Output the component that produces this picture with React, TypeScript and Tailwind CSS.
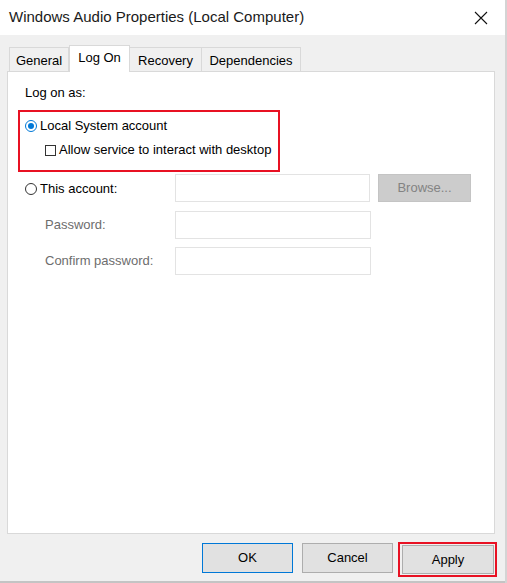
import React from "react";

function Radio({ checked }: { checked?: boolean }) {
  return (
    <span
      className={
        "flex h-[12px] w-[12px] items-center justify-center rounded-full border bg-white " +
        (checked ? "border-[#0078d7]" : "border-[#333333]")
      }
    >
      {checked && <span className="h-[6px] w-[6px] rounded-full bg-[#0078d7]" />}
    </span>
  );
}

function Field({ width = "w-[195px]" }: { width?: string }) {
  return <div className={"h-[28px] border border-[#e3e3e3] bg-white " + width} />;
}

function App() {
  return (
    <div className="flex h-[583px] w-[507px] bg-white font-['Liberation_Sans',Arial,sans-serif] text-[13px] text-black">
      <div className="flex w-[505px] flex-col border-b-2 border-[#c4c4c4]">
        {/* title bar */}
        <div className="flex h-[35px] items-center justify-between bg-white pl-[9px] pr-[16px]">
          <span className="text-[15px] text-[#1a1a1a]">Windows Audio Properties (Local Computer)</span>
          <svg width="14" height="14" viewBox="0 0 14 14" className="mr-[1px]">
            <path d="M1 1 L13 13 M13 1 L1 13" stroke="#111" strokeWidth="1.1" />
          </svg>
        </div>

        <div className="flex flex-1 flex-col bg-[#f0f0f0] px-[7px] pt-[10px]">
          {/* tabs */}
          <div className="flex items-end pl-[2px]">
            <div className="flex h-[24px] w-[60px] items-center justify-center border border-b-0 border-[#d9d9d9] pt-[2px]">General</div>
            <div className="-mb-[1px] z-10 flex h-[27px] w-[61px] items-center justify-center border border-b-0 border-[#d9d9d9] bg-white pb-[3px]">
              Log On
            </div>
            <div className="flex h-[24px] w-[72px] items-center justify-center border border-b-0 border-l-0 border-[#d9d9d9] pt-[2px]">Recovery</div>
            <div className="flex h-[24px] w-[99px] items-center justify-center border border-b-0 border-l-0 border-[#d9d9d9] pt-[2px]">Dependencies</div>
          </div>

          {/* panel */}
          <div className="flex h-[463px] w-[488px] flex-col border border-[#d9d9d9] bg-white pl-[10px] pt-[13px]">
            <div className="pl-[7px] leading-[16px]">Log on as:</div>

            <div className="mt-[9px] flex h-[62px] w-[262px] flex-col border-2 border-[#e81123] pl-[5px] pt-[6px]">
              <div className="flex items-center gap-[3px] leading-[16px]">
                <Radio checked />
                <span>Local System account</span>
              </div>
              <div className="mt-[8px] flex items-center gap-[3px] pl-[20px] leading-[16px]">
                <span className="h-[11px] w-[11px] border border-[#333333] bg-white" />
                <span>Allow service to interact with desktop</span>
              </div>
            </div>

            <div className="mt-[2px] flex items-center">
              <div className="flex w-[157px] items-center gap-[3px] pl-[7px] pt-[2px]">
                <Radio />
                <span>This account:</span>
              </div>
              <Field width="w-[195px]" />
              <div className="ml-[8px] flex h-[28px] w-[93px] items-center justify-center border border-[#c4c4c4] bg-[#cccccc] text-[#838383]">
                Browse...
              </div>
            </div>

            <div className="mt-[9px] flex items-center">
              <span className="w-[157px] pl-[27px] text-[#6d6d6d]">Password:</span>
              <Field width="w-[196px]" />
            </div>

            <div className="mt-[8px] flex items-center">
              <span className="w-[157px] pl-[27px] text-[#6d6d6d]">Confirm password:</span>
              <Field width="w-[196px]" />
            </div>
          </div>

          {/* buttons */}
          <div className="mt-[8px] flex justify-end pr-[1px]">
            <div className="mr-[9px] mt-[1px] flex h-[30px] w-[91px] items-center justify-center border border-[#0078d7] bg-[#e1e1e1]">
              OK
            </div>
            <div className="mr-[5px] mt-[1px] flex h-[30px] w-[91px] items-center justify-center border border-[#adadad] bg-[#e1e1e1]">
              Cancel
            </div>
            <div className="border-2 border-[#e81123] py-[1px] pl-[2px] pr-[1px]">
              <div className="flex h-[29px] w-[92px] items-center justify-center border border-[#adadad] bg-[#e1e1e1]">
                Apply
              </div>
            </div>
          </div>
        </div>
      </div>
      <div className="w-[2px] bg-[#d4d4d4]" />
    </div>
  );
}

export default App;
